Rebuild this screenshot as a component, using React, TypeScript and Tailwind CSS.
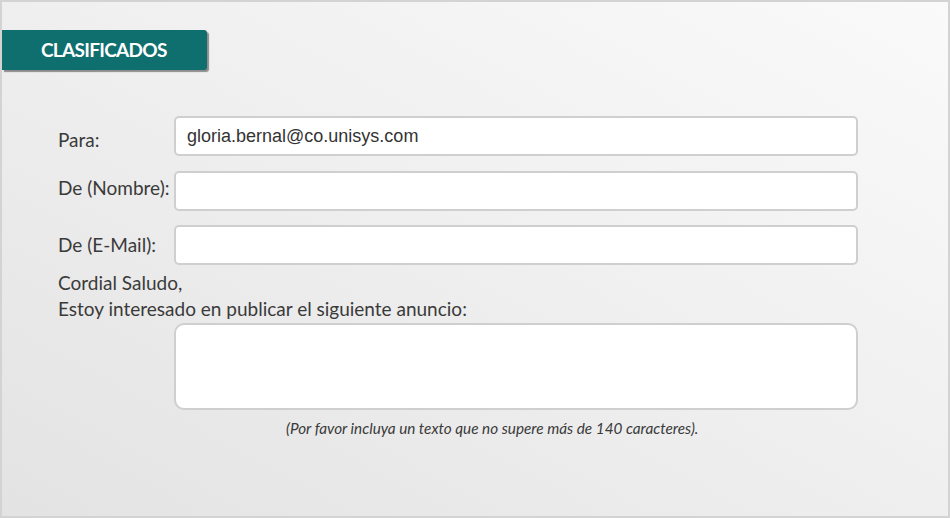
import React from "react";

const labelFont = { fontFamily: "Lato, 'Open Sans', sans-serif" };

function Field({ label, value, shift = 0 }: { label: string; value?: string; shift?: number }) {
  return (
    <div className="flex items-center">
      <label
        className="w-[116px] shrink-0 text-[19px] text-[#3a3a3a]"
        style={{ ...labelFont, transform: shift ? `translateY(${shift}px)` : undefined }}
      >
        {label}
      </label>
      <input
        readOnly
        value={value ?? ""}
        className="h-[40px] w-[684px] rounded-[5px] border-2 border-[#cfcfcf] bg-white px-[11px] text-[18px] text-[#333] outline-none"
        style={{ fontFamily: "'Liberation Sans', Arial, sans-serif" }}
      />
    </div>
  );
}

export default function App() {
  return (
    <div className="h-[518px] w-[950px] border-2 border-[#d3d3d3] bg-[linear-gradient(to_bottom_left,#fafafa_0%,#f0f0f0_45%,#e3e3e3_100%)]">
      <div className="pt-[28px]">
        <div className="flex h-[40px] w-[205px] items-center rounded-r-[3px] bg-[#0f6e6e] pl-[39px] shadow-[2px_2px_1px_rgba(60,60,60,0.55)]">
          <span className="text-[19px] font-bold tracking-[-0.7px] text-white" style={labelFont}>
            CLASIFICADOS
          </span>
        </div>
      </div>

      <div className="pl-[56px] pt-[46px]">
        <div className="flex flex-col">
          <Field label="Para:" value="gloria.bernal@co.unisys.com" shift={4} />
          <div className="mt-[15px]">
            <Field label="De (Nombre):" shift={-3} />
          </div>
          <div className="mt-[14px]">
            <Field label="De (E-Mail):" />
          </div>
        </div>

        <div className="mt-[5px] text-[19px] leading-[26px] text-[#3a3a3a]" style={labelFont}>
          <p>Cordial Saludo,</p>
          <p>Estoy interesado en publicar el siguiente anuncio:</p>
        </div>

        <div className="mt-[1px] pl-[116px]">
          <textarea
            readOnly
            className="block h-[87px] w-[684px] resize-none rounded-[10px] border-2 border-[#cfcfcf] bg-white outline-none"
          />
        </div>
        <p className="mt-[8px] pl-[228px] text-[15.3px] leading-[20px] italic text-[#3a3a3a]" style={labelFont}>
          (Por favor incluya un texto que no supere más de 140 caracteres).
        </p>
      </div>
    </div>
  );
}
